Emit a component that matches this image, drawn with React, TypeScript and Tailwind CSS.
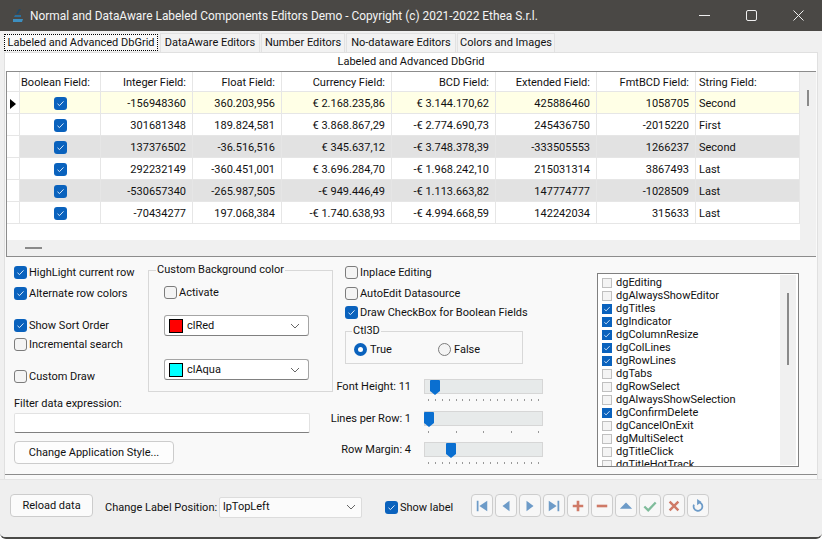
const rows = [
  { i: "-156948360", f: "360.203,956", c: "€ 2.168.235,86", b: "€ 3.144.170,62", e: "425886460", m: "1058705", s: "Second", bg: "bg-[#ffffe6]" },
  { i: "301681348", f: "189.824,581", c: "€ 3.868.867,29", b: "-€ 2.774.690,73", e: "245436750", m: "-2015220", s: "First", bg: "bg-white" },
  { i: "137376502", f: "-36.516,516", c: "€ 345.637,12", b: "-€ 3.748.378,39", e: "-333505553", m: "1266237", s: "Second", bg: "bg-[#e2e2e2]" },
  { i: "292232149", f: "-360.451,001", c: "€ 3.696.284,70", b: "-€ 1.968.242,10", e: "215031314", m: "3867493", s: "Last", bg: "bg-white" },
  { i: "-530657340", f: "-265.987,505", c: "-€ 949.446,49", b: "-€ 1.113.663,82", e: "147774777", m: "-1028509", s: "Last", bg: "bg-[#e2e2e2]" },
  { i: "-70434277", f: "197.068,384", c: "-€ 1.740.638,93", b: "-€ 4.994.668,59", e: "142242034", m: "315633", s: "Last", bg: "bg-white" },
];

const options: [string, boolean][] = [
  ["dgEditing", false],
  ["dgAlwaysShowEditor", false],
  ["dgTitles", true],
  ["dgIndicator", true],
  ["dgColumnResize", true],
  ["dgColLines", true],
  ["dgRowLines", true],
  ["dgTabs", false],
  ["dgRowSelect", false],
  ["dgAlwaysShowSelection", false],
  ["dgConfirmDelete", true],
  ["dgCancelOnExit", false],
  ["dgMultiSelect", false],
  ["dgTitleClick", false],
  ["dgTitleHotTrack", false],
];

function Box({ checked }: { checked?: boolean }) {
  if (checked) {
    return (
      <span className="w-[13px] h-[13px] rounded-[3px] shrink-0 bg-[#0a62bd] flex items-center justify-center">
        <svg width="9" height="9" viewBox="0 0 9 9" fill="none">
          <path d="M1.500 4.800 3.500 6.600 7.500 2.400" stroke="#d7e8fa" strokeWidth="1" />
        </svg>
      </span>
    );
  }
  return <span className="w-[13px] h-[13px] rounded-[3px] shrink-0 bg-[#f4f4f4] border border-[#7c7c7c]" />;
}

function ListBox({ checked }: { checked?: boolean }) {
  if (checked) {
    return (
      <span className="w-[10px] h-[10px] shrink-0 bg-[#0a62bd] flex items-center justify-center">
        <svg width="8" height="8" viewBox="0 0 9 9" fill="none">
          <path d="M1.500 4.800 3.500 6.600 7.500 2.400" stroke="#d7e8fa" strokeWidth="1" />
        </svg>
      </span>
    );
  }
  return <span className="w-[10px] h-[10px] shrink-0 bg-[#f4f4f4] border border-[#c0c0c0]" />;
}

function Check({ label, checked, className = "" }: { label: string; checked?: boolean; className?: string }) {
  return (
    <div className={`flex items-center gap-[2px] h-[16px] ${className}`}>
      <Box checked={checked} />
      <span className="whitespace-nowrap mt-[1px]">{label}</span>
    </div>
  );
}

function Chevron() {
  return (
    <svg width="10" height="6" viewBox="0 0 10 6" fill="none">
      <path d="M1 1l4 4 4-4" stroke="#666" strokeWidth="1" />
    </svg>
  );
}

function ColorCombo({ name, swatch, className = "" }: { name: string; swatch: string; className?: string }) {
  return (
    <div className={`flex items-center justify-between h-[21px] w-[145px] bg-white border border-[#a5a5a5] border-b-[#808080] rounded-[3px] pl-1 pr-2 ${className}`}>
      <div className="flex items-center gap-1">
        <span className={`w-[14px] h-[14px] border border-black ${swatch}`} />
        <span>{name}</span>
      </div>
      <Chevron />
    </div>
  );
}

function Slider({ label, thumb, ticks, className = "" }: { label: string; thumb: string; ticks: number; className?: string }) {
  return (
    <div className={`flex items-start h-[27px] ${className}`}>
      <span className="w-[81px] text-right mr-[13px] whitespace-nowrap">{label}</span>
      <div className="w-[119px]">
        <div className="relative h-[15px] bg-[#e7eaea] border border-[#d6d6d6]">
          <svg className={`absolute top-0 ${thumb}`} width="10" height="15" viewBox="0 0 10 15">
            <path d="M0 1q0-1 1-1h8q1 0 1 1v10l-5 4-5-4z" fill="#0a6fd0" />
          </svg>
        </div>
        <div className="flex justify-between px-1 mt-[5px]">
          {Array.from({ length: ticks }).map((_, n) => (
            <span key={n} className="w-px h-[2px] bg-[#999]" />
          ))}
        </div>
      </div>
    </div>
  );
}

function NavButton({ children }: { children: React.ReactNode }) {
  return (
    <div className="w-[22px] h-[23px] flex items-center justify-center bg-[#f7f7f7] border border-[#cdcdcd] rounded-[4px]">
      <svg width="14" height="14" viewBox="0 0 16 16">{children}</svg>
    </div>
  );
}

const cell = "pl-[3px] pr-[6px] pt-[2px] flex items-center border-r border-b border-[#e6e6e6] h-full whitespace-nowrap";

function App() {
  return (
    <div className="w-[822px] h-[539px] bg-[#f0f0f0] flex flex-col overflow-hidden text-[11px] leading-[16px] text-[#111] font-['Roboto',sans-serif] rounded-b-[6px] border-b-2 border-[#4a4a48]">
      {/* title bar */}
      <div className="h-[31px] shrink-0 bg-[#4a4845] text-[#f4f4f4] text-[11.9px] flex items-center pl-[12px]">
        <svg width="12" height="16" viewBox="0 0 12 16" className="mr-[6px]">
          <path d="M7 1h2L6 6H4z" fill="#1f4a6a" />
          <path d="M3 7h6v2H2z" fill="#2b6f9c" />
          <path d="M1 11h10l-1 3H1z" fill="#3d8fc0" />
        </svg>
        <span>Normal and DataAware Labeled Components Editors Demo - Copyright (c) 2021-2022 Ethea S.r.l.</span>
        <div className="ml-auto flex items-center gap-[36px] pr-[18px]">
          <svg width="11" height="11" viewBox="0 0 11 11"><path d="M0 5.500h11" stroke="#eee" /></svg>
          <svg width="11" height="11" viewBox="0 0 11 11"><rect x=".5" y=".5" width="10" height="10" rx="1.500" fill="none" stroke="#eee" /></svg>
          <svg width="11" height="11" viewBox="0 0 11 11"><path d="M.5.500l10 10m0-10-10 10" stroke="#eee" /></svg>
        </div>
      </div>

      {/* tabs */}
      <div className="h-[21px] shrink-0 flex items-start pl-[4px]">
        <div className="h-[17px] w-[154px] mt-[3px] flex items-center justify-center border border-dotted border-black bg-[#f9f9f9]">
          <span className="whitespace-nowrap">Labeled and Advanced DbGrid</span>
        </div>
        <div className="ml-[2px] mt-[2px] flex gap-px">
          {[
            ["DataAware Editors", "w-[100px]"],
            ["Number Editors", "w-[84px]"],
            ["No-dataware Editors", "w-[110px]"],
            ["Colors and Images", "w-[98px]"],
          ].map(([t, w]) => (
            <div key={t} className={`${w} h-[19px] flex items-center justify-center bg-[#f2f2f2] border border-b-0 border-[#e2e2e2] whitespace-nowrap`}>
              {t}
            </div>
          ))}
        </div>
      </div>

      {/* page */}
      <div className="flex-1 mx-[4px] bg-[#f9f9f9] border border-[#e0e0e0] border-b-0 flex flex-col min-h-0">
        <div className="h-[18px] shrink-0 flex items-center justify-center bg-white">Labeled and Advanced DbGrid</div>

        {/* grid */}
        <div className="h-[186px] shrink-0 border-t border-b border-l border-[#8c8c8c] flex flex-col bg-[#f0f0f0] ml-px mr-px">
          <div className="flex flex-1 min-h-0">
            <div className="w-[793px] shrink-0 bg-white flex flex-col">
              <div className="h-[20px] flex shrink-0">
                <div className={`${cell} w-[13px]`} />
                <div className={`${cell} w-[81px] !pl-[1px] !pr-0`}>Boolean Field:</div>
                <div className={`${cell} w-[92px] justify-end`}>Integer Field:</div>
                <div className={`${cell} w-[89px] justify-end`}>Float Field:</div>
                <div className={`${cell} w-[110px] justify-end`}>Currency Field:</div>
                <div className={`${cell} w-[104px] justify-end`}>BCD Field:</div>
                <div className={`${cell} w-[101px] justify-end`}>Extended Field:</div>
                <div className={`${cell} w-[99px] justify-end`}>FmtBCD Field:</div>
                <div className={`${cell} w-[104px]`}>String Field:</div>
              </div>
              {rows.map((r, n) => (
                <div key={r.i} className="h-[22px] flex shrink-0">
                  <div className={`${cell} w-[13px] justify-center !px-0 bg-white`}>
                    {n === 0 && (
                      <svg width="6" height="10" viewBox="0 0 6 10"><path d="M0 0l6 5-6 5z" fill="#000" /></svg>
                    )}
                  </div>
                  <div className={`${cell} ${r.bg} w-[81px] justify-center !px-0`}><Box checked /></div>
                  <div className={`${cell} ${r.bg} w-[92px] justify-end`}>{r.i}</div>
                  <div className={`${cell} ${r.bg} w-[89px] justify-end`}>{r.f}</div>
                  <div className={`${cell} ${r.bg} w-[110px] justify-end`}>{r.c}</div>
                  <div className={`${cell} ${r.bg} w-[104px] justify-end`}>{r.b}</div>
                  <div className={`${cell} ${r.bg} w-[101px] justify-end`}>{r.e}</div>
                  <div className={`${cell} ${r.bg} w-[99px] justify-end`}>{r.m}</div>
                  <div className={`${cell} ${r.bg} w-[104px]`}>{r.s}</div>
                </div>
              ))}
            </div>
            <div className="flex-1 bg-[#f0f0f0] flex justify-center pt-[18px]">
              <span className="w-[2px] h-[16px] bg-[#8a8a8a]" />
            </div>
          </div>
          <div className="h-[16px] shrink-0 flex items-center pl-[18px]">
            <span className="w-[17px] h-[2px] bg-[#8a8a8a]" />
          </div>
        </div>

        {/* options */}
        <div className="flex-1 flex min-h-0 border-b border-[#8c8c8c] pt-[7px] pl-[9px]">
          <div className="w-[320px] shrink-0 flex flex-col">
            <div className="flex">
              <div className="w-[134px] shrink-0 flex flex-col">
                <Check label="HighLight current row" checked />
                <Check label="Alternate row colors" checked className="mt-[5px]" />
                <Check label="Show Sort Order" checked className="mt-[16px]" />
                <Check label="Incremental search" className="mt-[3px]" />
                <Check label="Custom Draw" className="mt-[16px]" />
              </div>
              <div className="relative mt-[6px] w-[185px] h-[122px] border border-[#d8d8d8] pl-[15px] pt-[13px]">
                <span className="absolute left-[7px] top-[-9px] px-px bg-[#f9f9f9]">Custom Background color</span>
                <Check label="Activate" />
                <ColorCombo name="clRed" swatch="bg-[#ff0000]" className="mt-[15px]" />
                <ColorCombo name="clAqua" swatch="bg-[#00ffff]" className="mt-[23px]" />
              </div>
            </div>
            <div className="mt-[4px] leading-[15px]">Filter data expression:</div>
            <div className="mt-[2px] h-[20px] w-[296px] bg-white border border-[#e2e2e2] border-b-[#808080] rounded-[2px]" />
            <div className="mt-[8px] w-[160px] h-[23px] flex items-center justify-center bg-[#fdfdfd] border border-[#cccccc] rounded-[4px]">
              Change Application Style...
            </div>
          </div>

          <div className="ml-[11px] w-[212px] shrink-0 flex flex-col">
            <Check label="Inplace Editing" />
            <Check label="AutoEdit Datasource" className="mt-[5px]" />
            <Check label="Draw CheckBox for Boolean Fields" checked className="mt-[3px]" />
            <div className="relative mt-[11px] w-[178px] h-[33px] border border-[#d8d8d8] flex items-center pl-[8px] pt-[4px]">
              <span className="absolute left-[6px] top-[-9px] px-px bg-[#f9f9f9]">Ctl3D</span>
              <div className="flex items-center gap-[3px] w-[84px]">
                <span className="w-[13px] h-[13px] rounded-full bg-[#0a62bd] flex items-center justify-center">
                  <span className="w-[5px] h-[5px] rounded-full bg-white" />
                </span>
                <span>True</span>
              </div>
              <div className="flex items-center gap-[3px]">
                <span className="w-[13px] h-[13px] rounded-full bg-[#f4f4f4] border border-[#7c7c7c]" />
                <span>False</span>
              </div>
            </div>
            <div className="flex flex-col mt-[15px] -ml-[15px]">
              <Slider label="Font Height: 11" thumb="left-[5px]" ticks={17} className="mb-[5px]" />
              <Slider label="Lines per Row: 1" thumb="left-[-1px]" ticks={5} className="mb-[4px]" />
              <Slider label="Row Margin: 4" thumb="left-[21px]" ticks={17} />
            </div>
          </div>

          <div className="ml-[40px] mt-[9px] w-[202px] h-[194px] shrink-0 bg-white border border-[#808080] flex overflow-hidden">
            <div className="flex-1 flex flex-col pl-[4px] pt-[2px] overflow-hidden">
              {options.map(([t, on]) => (
                <div key={t} className="h-[13px] shrink-0 flex items-center gap-[4px]">
                  <ListBox checked={on} />
                  <span className="whitespace-nowrap leading-[13px]">{t}</span>
                </div>
              ))}
            </div>
            <div className="w-[16px] shrink-0 bg-[#f0f0f0] flex justify-center pt-[18px] my-px mr-[2px]">
              <span className="w-[2px] h-[72px] bg-[#8a8a8a]" />
            </div>
          </div>
        </div>

        <div className="h-[4px] shrink-0 bg-[#f9f9f9]" />
      </div>

      {/* footer */}
      <div className="h-[58px] shrink-0 bg-[#efefef] border-t border-[#e4e4e4] flex items-center pl-[10px] pb-[5px]">
        <div className="w-[83px] h-[23px] flex items-center justify-center bg-[#fbfbfb] border border-[#cccccc] rounded-[4px] -mt-[1px]">
          Reload data
        </div>
        <span className="ml-[12px] w-[112px] whitespace-nowrap mt-[3px]">Change Label Position:</span>
        <div className="ml-[2px] w-[143px] h-[21px] mt-[2px] flex items-center justify-between bg-[#fbfbfb] border border-[#dcdcdc] rounded-[2px] pl-[3px] pr-[5px]">
          <span>lpTopLeft</span>
          <Chevron />
        </div>
        <Check label="Show label" checked className="ml-[23px] mt-[2px] w-[67px]" />
        <div className="ml-[19px] flex gap-[2px] -mt-[1px]">
          <NavButton><path d="M2 2h2v12H2zM14 2v12L5 8z" fill="#6d9bc8" /></NavButton>
          <NavButton><path d="M12 2v12L4 8z" fill="#6d9bc8" /></NavButton>
          <NavButton><path d="M4 2v12l8-6z" fill="#6d9bc8" /></NavButton>
          <NavButton><path d="M12 2h2v12h-2zM2 2v12l9-6z" fill="#6d9bc8" /></NavButton>
          <NavButton><path d="M6.500 2h3v4.500H14v3H9.500V14h-3V9.500H2v-3h4.500z" fill="#cf7a67" /></NavButton>
          <NavButton><path d="M2 6.500h12v3H2z" fill="#cf7a67" /></NavButton>
          <NavButton><path d="M8 4l7 7H1z" fill="#6d9bc8" /></NavButton>
          <NavButton><path d="M1.500 8.500 6 13l8.500-9" fill="none" stroke="#7fbc9b" strokeWidth="2.600" /></NavButton>
          <NavButton><path d="M3 3l10 10m0-10L3 13" fill="none" stroke="#cf7a67" strokeWidth="2.800" /></NavButton>
          <NavButton>
            <path d="M8 3.500a5 5 0 1 1-4.600 3" fill="none" stroke="#6d9bc8" strokeWidth="2" />
            <path d="M7 0l5 3.500L7 7z" fill="#6d9bc8" />
          </NavButton>
        </div>
      </div>
    </div>
  );
}

export default App;
